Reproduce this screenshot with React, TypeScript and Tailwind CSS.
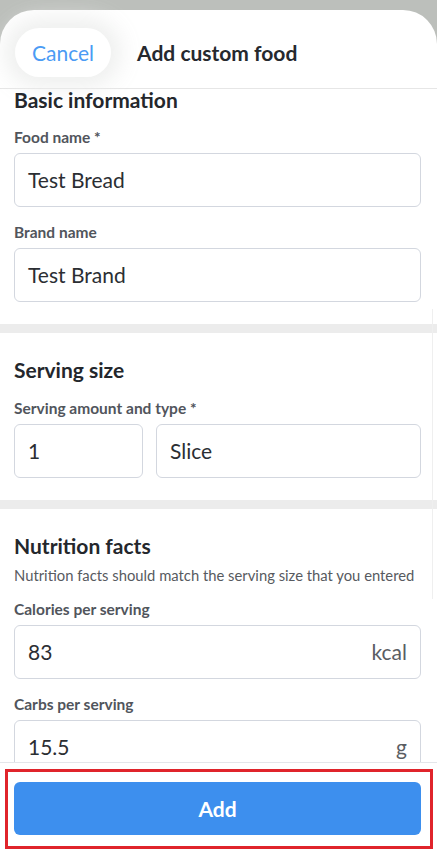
import React from 'react'

const font = { fontFamily: 'Lato, "Noto Sans", sans-serif' }

function Label({ children, className = '' }: { children: React.ReactNode; className?: string }) {
  return (
    <div className={`text-[15.5px] font-bold leading-[20px] text-[#51555c] ${className}`}>{children}</div>
  )
}

function Field({ value, unit, className = '' }: { value: string; unit?: string; className?: string }) {
  return (
    <div
      className={`flex h-[54px] items-center justify-between rounded-[6px] border border-[#d3d7df] bg-white pl-[13px] pr-[13px] text-[21px] text-[#2b2e33] ${className}`}
    >
      <span>{value}</span>
      {unit && <span className="text-[#5a5d63]">{unit}</span>}
    </div>
  )
}

function Title({ children }: { children: React.ReactNode }) {
  return <h2 className="text-[21px] font-bold leading-[22px] text-[#24272c]">{children}</h2>
}

export default function App() {
  return (
    <div style={font} className="flex h-[856px] w-[437px] flex-col overflow-hidden bg-[#bcbfbb] pt-[10px]">
      <div className="flex min-h-0 flex-1 flex-col rounded-t-[34px] bg-white">
        {/* header */}
        <header className="flex h-[79px] shrink-0 items-start gap-[26px] rounded-t-[34px] border-b border-[#e6e6e6] pl-[15px] pt-[18px]">
          <button className="flex h-[49px] items-center rounded-full bg-white px-[17px] text-[21px] text-[#4b9bf4] shadow-[0_0_22px_10px_rgba(236,237,236,0.9)]">
            Cancel
          </button>
          <div className="flex h-[49px] items-center text-[21px] font-bold text-[#26292e]">Add custom food</div>
        </header>

        <div className="relative min-h-0 flex-1">
          <section className="px-[14px] pb-[22px]">
            <Title>Basic information</Title>
            <Label className="mt-[16px]">Food name *</Label>
            <Field value="Test Bread" className="mt-[6px] w-[407px]" />
            <Label className="mt-[15px]">Brand name</Label>
            <Field value="Test Brand" className="mt-[6px] w-[407px]" />
          </section>
          <div className="h-[9px] bg-[#ececec]" />

          <section className="px-[14px] pb-[22px] pt-[26px]">
            <Title>Serving size</Title>
            <Label className="mt-[17px]">Serving amount and type *</Label>
            <div className="mt-[6px] flex gap-[13px]">
              <Field value="1" className="w-[129px]" />
              <Field value="Slice" className="w-[265px]" />
            </div>
          </section>
          <div className="h-[9px] bg-[#ececec]" />

          <section className="px-[14px] pt-[26px]">
            <Title>Nutrition facts</Title>
            <p className="mt-[8px] text-[14.8px] leading-[20px] text-[#575a60]">
              Nutrition facts should match the serving size that you entered
            </p>
            <Label className="mt-[14px]">Calories per serving</Label>
            <Field value="83" unit="kcal" className="mt-[6px] w-[407px]" />
            <Label className="mt-[15px]">Carbs per serving</Label>
            <Field value="15.5" unit="g" className="mt-[6px] w-[407px]" />
          </section>
          <div className="absolute right-[4px] top-[220px] h-[290px] w-px bg-[#efefef]" />
        </div>

        {/* footer */}
        <footer className="relative h-[94px] shrink-0 border-t border-[#e4e6ea] bg-white px-[14px] pt-[19px]">
          <button className="flex h-[53px] w-[407px] items-center justify-center rounded-[6px] bg-[#3d8fee] text-[21px] font-bold text-white">
            Add
          </button>
          <div className="pointer-events-none absolute left-[5px] top-[6px] h-[80px] w-[428px] border-[3px] border-[#e0242b]" />
        </footer>
      </div>
    </div>
  )
}
